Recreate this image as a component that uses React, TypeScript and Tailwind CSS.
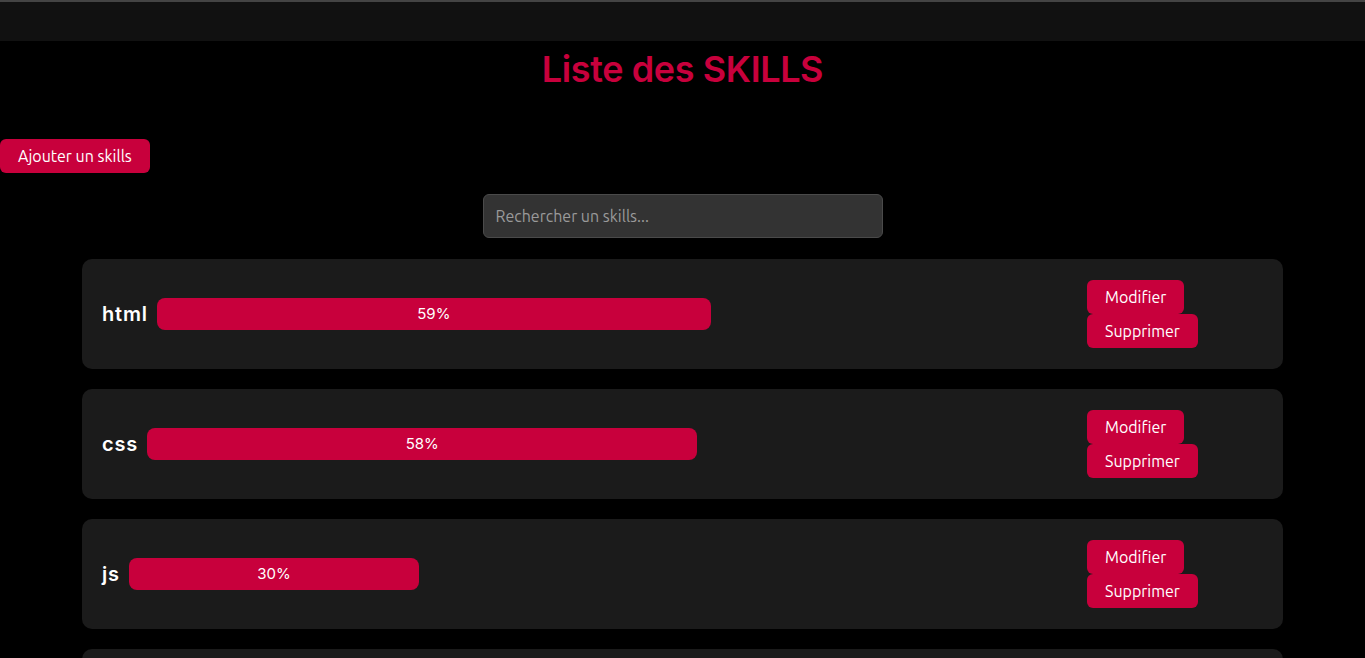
import React, { useState } from 'react';

type Skill = {
    id: number;
    name: string;
    level: number;
};

const skills: Skill[] = [
    { id: 1, name: 'html', level: 59 },
    { id: 2, name: 'css', level: 58 },
    { id: 3, name: 'js', level: 30 },
    { id: 4, name: 'react', level: 45 },
];

const btn = "bg-[#c8003c] text-white rounded-md font-['Ubuntu','Open_Sans',sans-serif] text-[16px] leading-[34px] h-[34px] px-[18px]";

const SkillRow = ({ skill }: { skill: Skill }) => (
    <div className="flex items-center h-[110px] bg-[#1b1b1b] rounded-[10px] pl-5 pr-[84px]">
        <span className="font-['Inter',sans-serif] font-semibold text-[20px] tracking-[0.8px] text-white">{skill.name}</span>
        <div className="flex-1 ml-[9px]">
            <div
                className="h-[32px] bg-[#c8003c] rounded-lg flex items-center justify-center font-['Inter',sans-serif] text-[15px] text-white"
                style={{ width: `${skill.level}%` }}
            >
                {skill.level}%
            </div>
        </div>
        <div className="w-[112px] -ml-[9px] flex flex-col items-start">
            <button className={btn}>Modifier</button>
            <button className={btn}>Supprimer</button>
        </div>
    </div>
);

export default function App() {
    const [search, setSearch] = useState('');
    const filtered = skills.filter((s) => s.name.toLowerCase().includes(search.toLowerCase()));

    return (
        <div className="min-h-screen bg-black">
            <div className="h-[41px] bg-[#111111] border-t-2 border-[#444444]" />
            <h1 className="text-center font-['Inter',sans-serif] font-semibold text-[36px] leading-[43px] text-[#c8003c] mt-[7px] tracking-[-0.4px]">
                Liste des SKILLS
            </h1>
            <div className="mt-[48px]">
                <button className={btn}>Ajouter un skills</button>
            </div>
            <div className="flex justify-center mt-[21px]">
                <input
                    type="text"
                    value={search}
                    onChange={(e) => setSearch(e.target.value)}
                    placeholder="Rechercher un skills..."
                    className="w-[400px] h-[44px] bg-[#333333] border border-[#4a4a4a] rounded-md px-3 font-['Ubuntu','Open_Sans',sans-serif] text-[16px] text-white placeholder:text-[#9a9a9a] outline-none"
                />
            </div>
            <div className="flex flex-col gap-5 mt-[21px] px-[82px] pb-10">
                {filtered.map((skill) => (
                    <SkillRow key={skill.id} skill={skill} />
                ))}
            </div>
        </div>
    );
}
